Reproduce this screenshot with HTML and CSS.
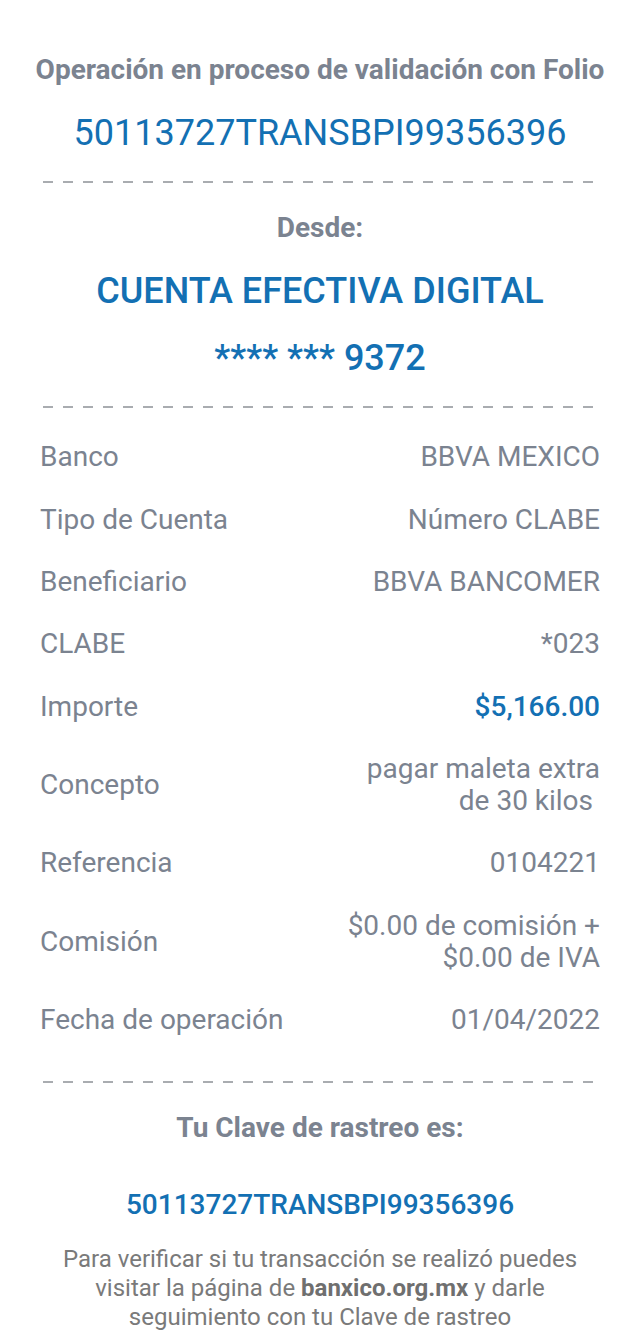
FILE: index.html
```html
<!DOCTYPE html>
<html lang="es">
<head>
    <meta charset="UTF-8">
    <meta name="viewport" content="width=device-width, initial-scale=1.0">
    <title>Comprobante de transferencia</title>
    <link rel="stylesheet" href="styles.css">
</head>
<body>
    <div id="receipt">
        <!-- FOLIO -->
        <h2 class="title">Operación en proceso de validación con Folio</h2>
        <p class="folio">50113727TRANSBPI99356396</p>
        <div class="dash"></div>

        <!-- ORIGEN -->
        <h2 class="title desde">Desde:</h2>
        <p class="account">CUENTA EFECTIVA DIGITAL</p>
        <p class="account stars">**** *** 9372</p>
        <div class="dash"></div>

        <!-- DETALLE -->
        <div id="details">
            <div class="row"><span class="label">Banco</span><span class="value">BBVA MEXICO</span></div>
            <div class="row"><span class="label">Tipo de Cuenta</span><span class="value">Número CLABE</span></div>
            <div class="row"><span class="label">Beneficiario</span><span class="value">BBVA BANCOMER</span></div>
            <div class="row"><span class="label">CLABE</span><span class="value">*023</span></div>
            <div class="row"><span class="label">Importe</span><span class="value amount">$5,166.00</span></div>
            <div class="row"><span class="label">Concepto</span><span class="value">pagar maleta extra<br>de 30 kilos&nbsp;</span></div>
            <div class="row"><span class="label">Referencia</span><span class="value">0104221</span></div>
            <div class="row"><span class="label">Comisión</span><span class="value">$0.00 de comisión +<br>$0.00 de IVA</span></div>
            <div class="row"><span class="label">Fecha de operación</span><span class="value">01/04/2022</span></div>
        </div>
        <div class="dash dash-last"></div>

        <!-- RASTREO -->
        <h2 class="title clave">Tu Clave de rastreo es:</h2>
        <p class="tracking">50113727TRANSBPI99356396</p>
        <p class="note">Para verificar si tu transacción se realizó puedes visitar la página de <b>banxico.org.mx</b> y darle seguimiento con tu Clave de rastreo</p>
    </div>
</body>
</html>
```

FILE: styles.css
```css
*{
    margin:0;
    padding:0;
}
body{
    background-color: white;
    font-family: Roboto, "Liberation Sans", sans-serif;
}
#receipt{
    padding:55px 40px 0 40px;
    text-align: center;
}
/* TITLES */
.title{
    margin-left: -40px;
    margin-right: -40px;
    font-size: 28px;
    line-height: 30px;
    font-weight: bold;
    color: #7b8390;
    white-space: nowrap;
}
.desde{
    margin-top: 30px;
}
.clave{
    margin-top: 30px;
}
.folio{
    margin-top: 28px;
    font-size: 36px;
    line-height: 40px;
    color: #1370b3;
}
.account{
    margin-top: 28px;
    font-size: 36px;
    line-height: 40px;
    font-weight: 500;
    color: #1370b3;
}
.stars{
    margin-top: 27px;
}
/* DASHED LINE */
.dash{
    margin: 28px 0 0 3px;
    width: 550px;
    height: 2px;
    background: repeating-linear-gradient(to right, #a9acb0 0 10px, transparent 10px 20px);
}
.dash-last{
    margin-top: 30px;
}
/* DETAIL ROWS */
#details{
    margin-top: 18px;
}
.row{
    display: flex;
    justify-content: space-between;
    align-items: center;
    padding: 15.2px 0;
    font-size: 28px;
    line-height: 32px;
    color: #7b8390;
}
.label{
    text-align: left;
}
.value{
    text-align: right;
}
.amount{
    color: #1370b3;
    font-weight: 500;
}
/* TRACKING */
.tracking{
    margin-top: 46px;
    font-size: 28px;
    line-height: 32px;
    font-weight: 500;
    color: #1370b3;
}
.note{
    margin: 24px auto 0 auto;
    max-width: 530px;
    font-size: 24px;
    line-height: 29px;
    color: #7a7a7a;
}
.note b{
    color: #6f6f6f;
}
```
